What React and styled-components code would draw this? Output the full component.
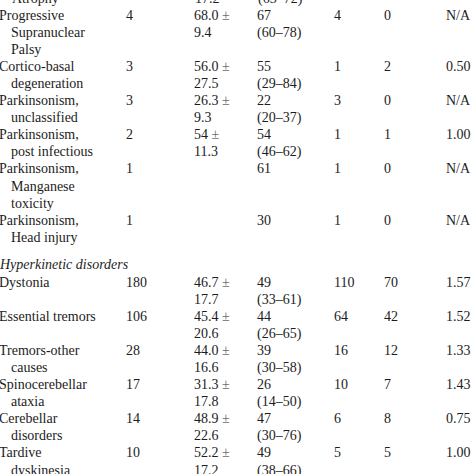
import React from 'react';
import styled, { createGlobalStyle } from 'styled-components';

const GlobalStyle = createGlobalStyle`
	html, body {
		margin: 0;
		padding: 0;
		background: #ffffff;
		overflow: hidden;
	}
	body {
		font-family: 'Liberation Serif', 'Times New Roman', serif;
		color: #1c1c1c;
	}
`;

const rows = [
	{ name: ['', 'Atrophy'], n: '', mean: ['17.2'], median: ['(65–72)'], a: '', b: '', r: '', partial: true },
	{ name: ['Progressive', 'Supranuclear', 'Palsy'], n: '4', mean: ['68.0 ±', '9.4'], median: ['67', '(60–78)'], a: '4', b: '0', r: 'N/A' },
	{ name: ['Cortico-basal', 'degeneration'], n: '3', mean: ['56.0 ±', '27.5'], median: ['55', '(29–84)'], a: '1', b: '2', r: '0.50' },
	{ name: ['Parkinsonism,', 'unclassified'], n: '3', mean: ['26.3 ±', '9.3'], median: ['22', '(20–37)'], a: '3', b: '0', r: 'N/A' },
	{ name: ['Parkinsonism,', 'post infectious'], n: '2', mean: ['54 ±', '11.3'], median: ['54', '(46–62)'], a: '1', b: '1', r: '1.00' },
	{ name: ['Parkinsonism,', 'Manganese', 'toxicity'], n: '1', mean: [], median: ['61'], a: '1', b: '0', r: 'N/A' },
	{ name: ['Parkinsonism,', 'Head injury'], n: '1', mean: [], median: ['30'], a: '1', b: '0', r: 'N/A' },
	{ section: 'Hyperkinetic disorders' },
	{ name: ['Dystonia'], n: '180', mean: ['46.7 ±', '17.7'], median: ['49', '(33–61)'], a: '110', b: '70', r: '1.57' },
	{ name: ['Essential tremors'], n: '106', mean: ['45.4 ±', '20.6'], median: ['44', '(26–65)'], a: '64', b: '42', r: '1.52' },
	{ name: ['Tremors-other', 'causes'], n: '28', mean: ['44.0 ±', '16.6'], median: ['39', '(30–58)'], a: '16', b: '12', r: '1.33' },
	{ name: ['Spinocerebellar', 'ataxia'], n: '17', mean: ['31.3 ±', '17.8'], median: ['26', '(14–50)'], a: '10', b: '7', r: '1.43' },
	{ name: ['Cerebellar', 'disorders'], n: '14', mean: ['48.9 ±', '22.6'], median: ['47', '(30–76)'], a: '6', b: '8', r: '0.75' },
	{ name: ['Tardive', 'dyskinesia'], n: '10', mean: ['52.2 ±', '17.2'], median: ['49', '(38–66)'], a: '5', b: '5', r: '1.00' },
];

const Table = styled.div`
	margin-top: -10.5px;
	font-size: 14px;
	line-height: 17.1px;
`;

const Row = styled.div`
	display: grid;
	grid-template-columns: 127px 68px 63px 77px 50px 62px 1fr;
	margin-left: ${(p) => (p.$partial ? '0' : '-1px')};
`;

const Cell = styled.div`
	white-space: nowrap;
`;

const Line = styled.span`
	display: block;
	min-height: 17.1px;
	padding-left: ${(p) => (p.$indent ? '12px' : '0')};
`;

const Section = styled.div`
	margin-top: 10.5px;
	font-style: italic;
	white-space: nowrap;
`;

const Plus = styled.span`
	color: #6a6a6a;
`;

const renderMean = (line) => {
	if (line.endsWith('±')) {
		return (
			<>
				{line.slice(0, -1)}
				<Plus>±</Plus>
			</>
		);
	}
	return line;
};

export default function App() {
	return (
		<>
			<GlobalStyle />
			<Table>
				{rows.map((row, i) =>
					row.section ? (
						<Section key={i}>{row.section}</Section>
					) : (
						<Row key={i} $partial={row.partial}>
							<Cell>
								{row.partial ? (
									<Line $indent>{row.name[1]}</Line>
								) : (
									row.name.map((l, j) => (
										<Line key={j} $indent={j > 0}>
											{l}
										</Line>
									))
								)}
							</Cell>
							<Cell>{row.n}</Cell>
							<Cell>
								{row.mean.map((l, j) => (
									<Line key={j}>{renderMean(l)}</Line>
								))}
							</Cell>
							<Cell>
								{row.median.map((l, j) => (
									<Line key={j}>{l}</Line>
								))}
							</Cell>
							<Cell>{row.a}</Cell>
							<Cell>{row.b}</Cell>
							<Cell>{row.r}</Cell>
						</Row>
					)
				)}
			</Table>
		</>
	);
}
